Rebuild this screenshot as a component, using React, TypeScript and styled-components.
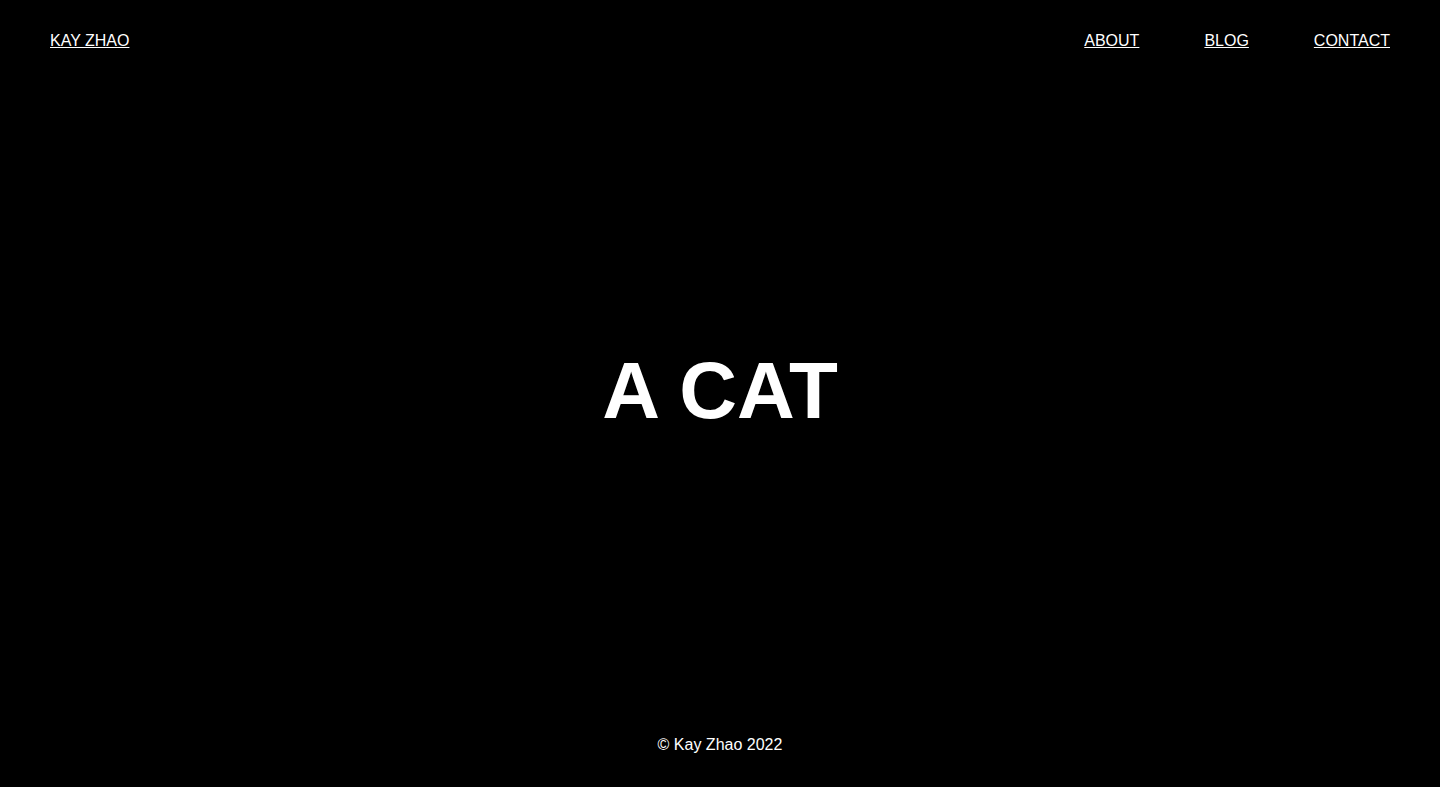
import React from "react";
import styled, { createGlobalStyle } from "styled-components";

const Global = createGlobalStyle`
  html, body { margin: 0; padding: 0; background: #000; }
  body { font-family: "Liberation Sans", Arial, sans-serif; color: #fff; }
`;

const Page = styled.div`
  min-height: 100vh;
  display: flex;
  flex-direction: column;
  background: #000;
`;

const Header = styled.header`
  display: flex;
  justify-content: space-between;
  align-items: center;
  padding: 32px 50px 28px;
`;

const NavLink = styled.a`
  color: #fff;
  font-size: 16px;
  text-decoration: underline;
  text-transform: uppercase;
`;

const Nav = styled.nav`
  display: flex;
  gap: 65px;
`;

const Main = styled.main`
  flex: 1;
  display: flex;
  align-items: center;
  justify-content: center;
  padding-bottom: 32px;
`;

const Title = styled.h1`
  margin: 0;
  font-size: 80px;
  font-weight: 700;
  color: #fff;
`;

const Footer = styled.footer`
  text-align: center;
  font-size: 16px;
  padding: 0 0 33px;
`;

export default function App() {
  return (
    <Page>
      <Global />
      <Header>
        <NavLink href="#">Kay Zhao</NavLink>
        <Nav>
          <NavLink href="#">About</NavLink>
          <NavLink href="#">Blog</NavLink>
          <NavLink href="#">Contact</NavLink>
        </Nav>
      </Header>
      <Main>
        <Title>A CAT</Title>
      </Main>
      <Footer>© Kay Zhao 2022</Footer>
    </Page>
  );
}
